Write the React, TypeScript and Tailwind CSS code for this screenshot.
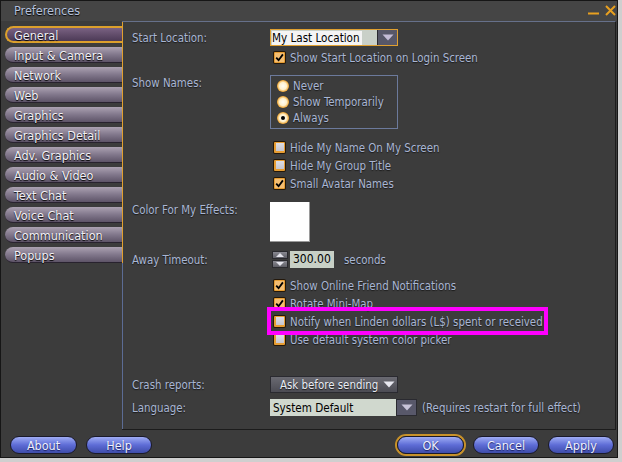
import React from "react";

const tabs = [
  "General",
  "Input & Camera",
  "Network",
  "Web",
  "Graphics",
  "Graphics Detail",
  "Adv. Graphics",
  "Audio & Video",
  "Text Chat",
  "Voice Chat",
  "Communication",
  "Popups",
];

function Check({ checked }: { checked: boolean }) {
  return (
    <span className="w-[13px] h-[13px] shrink-0 rounded-[2px] bg-[#24180a] p-[1px] flex">
      <span className="flex-1 rounded-[1px] bg-[#e79d32] flex items-center justify-center">
        {checked ? (
          <svg width="9" height="9" viewBox="0 0 9 9">
            <rect x="0" y="0" width="9" height="9" fill="#f4be72" />
            <path d="M1.2 4.6 L3.6 7.2 L7.9 1.4" stroke="#000" strokeWidth="1.8" fill="none" />
          </svg>
        ) : (
          <span className="w-[8px] h-[8px] bg-gradient-to-b from-[#dedee4] to-[#c6c6cf]" />
        )}
      </span>
    </span>
  );
}

function Radio({ on }: { on: boolean }) {
  return (
    <span className="w-[12px] h-[12px] shrink-0 rounded-full bg-[radial-gradient(circle,#fffdf4_0%,#fff0cc_42%,#f0a838_68%,#4a300c_100%)] flex items-center justify-center">
      {on && <span className="w-[4px] h-[4px] rounded-full bg-black" />}
    </span>
  );
}

function Tri({ color }: { color: string }) {
  return (
    <svg width="12" height="7" viewBox="0 0 12 7">
      <path d="M0.5 0.5 L11.5 0.5 L6 6.5 Z" fill={color} />
    </svg>
  );
}

function CheckRow({ checked, label, className }: { checked: boolean; label: string; className: string }) {
  return (
    <div className={"h-[14px] flex items-center pl-[141px] " + className}>
      <Check checked={checked} />
      <span className="ml-[4px] pt-[2px] whitespace-nowrap">{label}</span>
    </div>
  );
}

function Btn({ label, w, ok }: { label: string; w: string; ok?: boolean }) {
  return (
    <div
      className={
        "h-[18px] rounded-full border border-[#1a1a2a] bg-gradient-to-b from-[#a0acf4] via-[#5e6cd6] to-[#3e4caa] flex items-center justify-center text-[12.5px] text-[#eef0ff] [text-shadow:0_1px_1px_#1a2060] " +
        w +
        (ok ? " shadow-[0_0_0_2px_#c8922a]" : "")
      }
    >
      {label}
    </div>
  );
}

export default function App() {
  return (
    <div className="w-[622px] h-[462px] bg-[#cfcfcf] font-['DejaVu_Sans_Condensed','DejaVu_Sans',sans-serif] leading-[13px]">
      <div className="w-[618px] h-[458px] bg-[#3c3c3c] border border-[#161616] flex flex-col">
        {/* title bar */}
        <div className="h-[20px] bg-[#454545] flex items-center justify-between pl-[13px]">
          <span className="text-[12.5px] pb-[2px] text-[#b6c2de] [text-shadow:0_1px_1px_#000]">Preferences</span>
          <svg width="30" height="20" viewBox="0 0 30 20">
            <rect x="1" y="11.5" width="11" height="2" fill="#e8a020" />
            <path d="M19 5 L28 14 M28 5 L19 14" stroke="#e8a020" strokeWidth="2" />
          </svg>
        </div>

        {/* main row */}
        <div className="h-[409px] flex">
          {/* tabs */}
          <div className="w-[121px] pl-[4px] pt-[6px] flex flex-col gap-[4px]">
            {tabs.map((t, i) =>
              i === 0 ? (
                <div
                  key={t}
                  className="h-[17px] -mt-[1px] mr-[-1px] rounded-l-full border-2 border-r-0 border-[#dca02c] bg-gradient-to-b from-[#7a6282] to-[#4c3a56] pl-[7px] pt-[1px] flex items-center text-[12.5px] text-[#f0eef6] [text-shadow:0_1px_1px_#000]"
                >
                  {t}
                </div>
              ) : (
                <div
                  key={t}
                  className="h-[16px] rounded-l-full border-b border-[#28222e] bg-gradient-to-b from-[#aca2b2] via-[#82788c] to-[#5e5468] pl-[9px] pt-[1px] flex items-center text-[12.5px] text-[#f2f0f6] [text-shadow:0_1px_1px_#000]"
                >
                  {t}
                </div>
              )
            )}
          </div>

          {/* panel */}
          <div className="w-[494px] border-t border-[#66708a] border-b border-r border-b-[#1c1c1c] border-r-[#1c1c1c] flex">
            <div className="w-[1px] flex flex-col">
              <div className="h-[241px] bg-[#e0a030]" />
              <div className="flex-1 bg-[#5c6c94]" />
            </div>
            <div className="flex-1 pl-[9px] flex flex-col text-[11.4px] text-[#a9b6d4] [text-shadow:0_1px_1px_#1a1a1a]">
              {/* Start location */}
              <div className="mt-[7px] h-[17px] flex items-center">
                <div className="w-[138px] pt-[2px]">Start Location:</div>
                <div className="w-[128px] h-[17px] border border-[#e0a030] flex [text-shadow:none]">
                  <div className="flex-1 bg-[#c9d0c8] flex items-center pl-[1px]">
                    <span className="bg-[#f4f4f4] text-black text-[11.6px] pr-[2px] leading-[14px] whitespace-nowrap">My Last Location</span>
                  </div>
                  <div className="w-[20px] bg-[#575768] flex items-center justify-center border-l border-[#2a2a30]">
                    <Tri color="#c4bcd6" />
                  </div>
                </div>
              </div>

              <CheckRow className="mt-[4px]" checked={true} label="Show Start Location on Login Screen" />

              {/* Show names */}
              <div className="mt-[11px] flex">
                <div className="w-[138px] pt-[2px]">Show Names:</div>
                <div className="w-[128px] h-[54px] border border-[#6c7a9c] pt-[2px] pl-[6px] flex flex-col">
                  {[
                    ["Never", false],
                    ["Show Temporarily", false],
                    ["Always", true],
                  ].map(([l, on]) => (
                    <div key={l as string} className="h-[16px] flex items-center">
                      <Radio on={on as boolean} />
                      <span className="ml-[4px] pt-[1px] whitespace-nowrap">{l as string}</span>
                    </div>
                  ))}
                </div>
              </div>

              <CheckRow className="mt-[11px]" checked={false} label="Hide My Name On My Screen" />
              <CheckRow className="mt-[4px]" checked={false} label="Hide My Group Title" />
              <CheckRow className="mt-[4px]" checked={true} label="Small Avatar Names" />

              {/* color */}
              <div className="mt-[12px] flex">
                <div className="w-[138px] pt-[2px]">Color For My Effects:</div>
                <div className="w-[40px] h-[40px] bg-white border-r border-b border-[#9a9a9a]" />
              </div>

              {/* away timeout */}
              <div className="mt-[9px] h-[17px] flex items-center">
                <div className="w-[138px] pt-[2px]">Away Timeout:</div>
                <div className="ml-[2px] w-[16px] h-[17px] flex flex-col gap-[1px]">
                  <div className="flex-1 bg-gradient-to-b from-[#8a8a92] to-[#5e5e66] border border-[#2a2a2e] flex items-center justify-center">
                    <svg width="8" height="4" viewBox="0 0 8 4">
                      <path d="M0 4 L4 0 L8 4 Z" fill="#e4e4ec" />
                    </svg>
                  </div>
                  <div className="flex-1 bg-gradient-to-b from-[#8a8a92] to-[#5e5e66] border border-[#2a2a2e] flex items-center justify-center">
                    <svg width="8" height="4" viewBox="0 0 8 4">
                      <path d="M0 0 L8 0 L4 4 Z" fill="#e4e4ec" />
                    </svg>
                  </div>
                </div>
                <div className="ml-[2px] w-[44px] h-[17px] bg-[#c8d0c6] text-black text-[12px] pl-[3px] flex items-center [text-shadow:none]">
                  300.00
                </div>
                <span className="ml-[10px] pt-[2px]">seconds</span>
              </div>

              <CheckRow className="mt-[10px]" checked={true} label="Show Online Friend Notifications" />
              <CheckRow className="mt-[4px]" checked={true} label="Rotate Mini-Map" />
              <div className="mt-[4px] h-[14px] flex items-center">
                <div className="w-[138px]" />
                <div className="relative h-[14px] flex items-center pl-[3px]">
                  <Check checked={false} />
                  <span className="ml-[4px] pt-[2px] whitespace-nowrap">Notify when Linden dollars (L$) spent or received</span>
                  <span className="absolute left-[-3px] top-[-7px] w-[281px] h-[28px] border-4 border-[#ff00ff]" />
                </div>
              </div>
              <CheckRow className="mt-[4px]" checked={false} label="Use default system color picker" />

              {/* crash reports */}
              <div className="mt-[30px] h-[17px] flex items-center">
                <div className="w-[138px] pt-[2px]">Crash reports:</div>
                <div className="w-[128px] h-[17px] border border-[#2a2a30] bg-gradient-to-b from-[#6a6a72] to-[#4c4c54] flex items-center pl-[9px] pr-[2px] justify-between text-[#e8ecf4]">
                  <span className="whitespace-nowrap pt-[1px]">Ask before sending</span>
                  <Tri color="#e8e8f0" />
                </div>
              </div>

              {/* language */}
              <div className="mt-[6px] h-[17px] flex items-center">
                <div className="w-[138px] pt-[2px]">Language:</div>
                <div className="w-[147px] h-[17px] flex [text-shadow:none]">
                  <div className="w-[126px] bg-[#d0d8ce] text-black text-[11.6px] pl-[3px] pt-[1px] flex items-center whitespace-nowrap">System Default</div>
                  <div className="flex-1 bg-[#58586a] border border-[#2a2a30] flex items-center justify-center">
                    <Tri color="#c8c4d8" />
                  </div>
                </div>
                <span className="ml-[5px] pt-[1px] whitespace-nowrap">(Requires restart for full effect)</span>
              </div>
            </div>
          </div>
        </div>

        {/* bottom buttons */}
        <div className="h-[27px] flex items-start pt-[6px] pl-[9px] pr-[3px]">
          <Btn label="About" w="w-[67px]" />
          <div className="ml-[9px]">
            <Btn label="Help" w="w-[66px]" />
          </div>
          <div className="flex-1" />
          <Btn label="OK" w="w-[67px]" ok />
          <div className="ml-[9px]">
            <Btn label="Cancel" w="w-[66px]" />
          </div>
          <div className="ml-[9px]">
            <Btn label="Apply" w="w-[66px]" />
          </div>
        </div>
      </div>
    </div>
  );
}
